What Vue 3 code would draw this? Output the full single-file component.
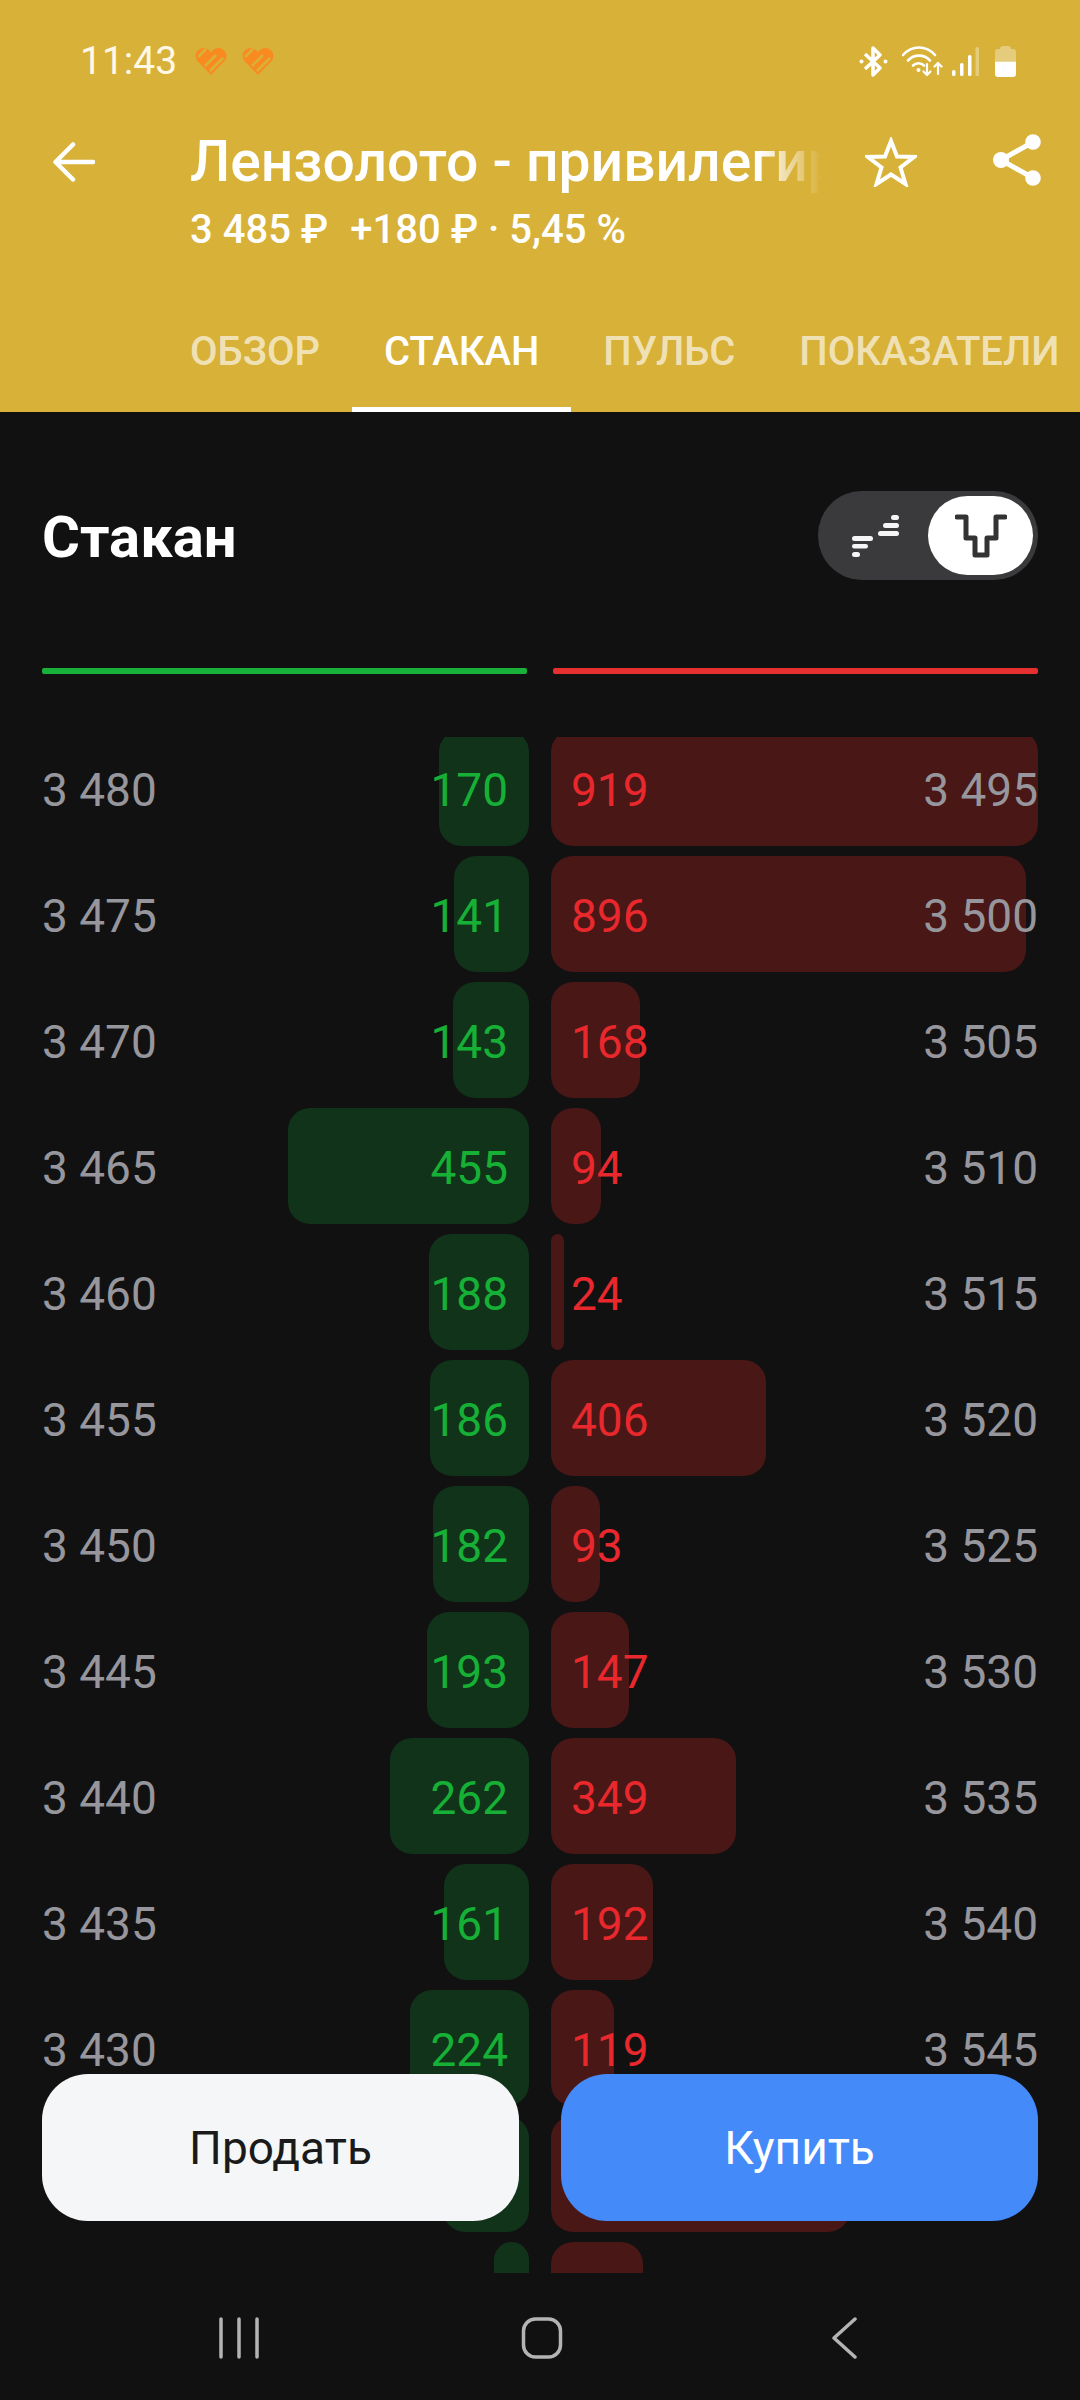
<script setup>
const tabs = ['Обзор', 'Стакан', 'Пульс', 'Показатели'];

const rows = [
  { bid: '3 480', bidQty: 170, ask: '3 495', askQty: 919 },
  { bid: '3 475', bidQty: 141, ask: '3 500', askQty: 896 },
  { bid: '3 470', bidQty: 143, ask: '3 505', askQty: 168 },
  { bid: '3 465', bidQty: 455, ask: '3 510', askQty: 94 },
  { bid: '3 460', bidQty: 188, ask: '3 515', askQty: 24 },
  { bid: '3 455', bidQty: 186, ask: '3 520', askQty: 406 },
  { bid: '3 450', bidQty: 182, ask: '3 525', askQty: 93 },
  { bid: '3 445', bidQty: 193, ask: '3 530', askQty: 147 },
  { bid: '3 440', bidQty: 262, ask: '3 535', askQty: 349 },
  { bid: '3 435', bidQty: 161, ask: '3 540', askQty: 192 },
  { bid: '3 430', bidQty: 224, ask: '3 545', askQty: 119 },
  { bid: '3 425', bidQty: 162, ask: '3 550', askQty: 564 },
  // only the top of this row shows above the nav bar, so no labels
  { bid: '', bidQty: 66, ask: '', askQty: 174 },
];

// bar length follows the quantity, 919 fills the whole column
const barWidth = (qty) => `${Math.round(qty * 0.53)}px`;
</script>

<template>
  <div class="screen">
    <header class="top">
      <div class="status">
        <span class="time">11:43</span>
        <svg v-for="n in 2" :key="n" class="heart" viewBox="0 0 32 28">
          <path d="M16 28 L2.500 14 C-2 8.500 2 1 8.500 1 C11.500 1 14.500 3 16 5.500 C17.500 3 20.500 1 23.500 1 C30 1 34 8.500 29.500 14 Z" fill="#f98a20" />
          <path d="M3 10 L11 2 M10 19 L21 8 M15 24 L28 11" stroke="#d8b138" stroke-width="2.500" fill="none" />
        </svg>
        <div class="status-icons">
          <svg width="29" height="31" viewBox="0 0 29 31" fill="none" stroke="#fff" stroke-width="3.500">
            <path d="M6 8 L21 22 L14 29 V2 L21 9 L6 23" stroke-linejoin="round" />
            <circle cx="2.500" cy="15.500" r="2" fill="#fff" stroke="none" />
            <circle cx="26.500" cy="15.500" r="2" fill="#fff" stroke="none" />
          </svg>
          <svg class="wifi" width="41" height="31" viewBox="0 0 41 31" fill="none" stroke="#fff" stroke-width="2.600" stroke-linecap="round">
            <path d="M1 9 C10 -1 24 -1 33 9" />
            <path d="M6 14.500 C12 8 22 8 28 14.500" />
            <path d="M11 19.500 C14 16.500 19 16.500 22 19.500" />
            <circle cx="16.500" cy="24" r="2" fill="#fff" stroke="none" />
            <path d="M25 18 V29 M21.500 25.500 L25 29 L28.500 25.500" stroke-width="2.200" />
            <path d="M36 28 V17 M32.500 20.500 L36 17 L39.500 20.500" stroke-width="2.200" />
          </svg>
          <svg class="signal" width="28" height="31" viewBox="0 0 28 31" fill="#fff">
            <rect x="0" y="24" width="3.500" height="6" rx="1.500" />
            <rect x="8" y="17" width="3.500" height="13" rx="1.500" />
            <rect x="16" y="9" width="3.500" height="21" rx="1.500" />
            <rect x="23.500" y="1" width="3.500" height="29" rx="1.500" opacity="0.350" />
          </svg>
          <svg class="battery" width="21" height="31" viewBox="0 0 21 31" fill="#fff">
            <path d="M5 3 Q5 0 8 0 H13 Q16 0 16 3 H18 Q21 3 21 6 V15 H0 V6 Q0 3 3 3 Z" opacity="0.350" />
            <path d="M0 15.500 H21 V28 Q21 31 18 31 H3 Q0 31 0 28 Z" />
          </svg>
        </div>
      </div>

      <div class="bar">
        <svg class="back" width="42" height="40" viewBox="0 0 42 40" fill="none" stroke="#fff" stroke-width="4.500" stroke-linecap="round" stroke-linejoin="round">
          <path d="M40 20 H3 M20 2.500 L2.500 20 L20 37.500" />
        </svg>
        <div class="titles">
          <div class="title">Лензолото - привилегированные</div>
          <div class="price">
            <span>3 485 ₽</span>
            <span>+180 ₽ · 5,45 %</span>
          </div>
        </div>
        <svg class="star" width="52" height="50" viewBox="0 0 52 50" fill="none" stroke="#fff" stroke-width="4" stroke-linejoin="miter">
          <path d="M26 4 L32 19.500 L49 20 L35.500 30.500 L40.500 47 L26 37.500 L11.500 47 L16.500 30.500 L3 20 L20 19.500 Z" />
        </svg>
        <svg class="share" width="48" height="52" viewBox="0 0 48 52" fill="#fff" stroke="#fff" stroke-width="5">
          <path d="M40 8 L8 26 L40 44" fill="none" />
          <circle cx="40" cy="8" r="7.800" stroke="none" />
          <circle cx="8" cy="26" r="8" stroke="none" />
          <circle cx="40" cy="44" r="7.800" stroke="none" />
        </svg>
      </div>

      <nav class="tabs">
        <div v-for="(tab, i) in tabs" :key="tab" class="tab" :class="{ active: i === 1 }">{{ tab }}</div>
      </nav>
    </header>

    <section class="heading">
      <h1>Стакан</h1>
      <div class="toggle">
        <div class="toggle-item">
          <svg width="47" height="42" viewBox="0 0 47 42" fill="#f5f5f5">
            <rect x="0" y="21" width="21" height="5" rx="2.500" />
            <rect x="0" y="29" width="16" height="4.500" rx="2.200" />
            <rect x="0" y="37" width="8" height="5" rx="2.500" />
            <rect x="26" y="16" width="21" height="5" rx="2.500" />
            <rect x="31" y="8" width="16" height="5" rx="2.500" />
            <rect x="39" y="0" width="8" height="5" rx="2.500" />
          </svg>
        </div>
        <div class="toggle-item on">
          <svg width="52" height="44" viewBox="0 0 52 44" fill="none" stroke="#333" stroke-width="5" stroke-linecap="round" stroke-linejoin="round">
            <path d="M2 3 H11 V24 H20 V41 H32 V24 H41 V3 H50" />
          </svg>
        </div>
      </div>
    </section>

    <div class="lines">
      <div class="line green"></div>
      <div class="line red"></div>
    </div>

    <div class="book">
      <div class="rows">
        <div v-for="(row, i) in rows" :key="i" class="row">
          <div class="cell bid">
            <div class="fill" :style="{ width: barWidth(row.bidQty) }"></div>
            <template v-if="row.bid">
              <span class="lvl">{{ row.bid }}</span>
              <span class="qty">{{ row.bidQty }}</span>
            </template>
          </div>
          <div class="cell ask">
            <div class="fill" :style="{ width: barWidth(row.askQty) }"></div>
            <template v-if="row.ask">
              <span class="qty">{{ row.askQty }}</span>
              <span class="lvl">{{ row.ask }}</span>
            </template>
          </div>
        </div>
      </div>
    </div>

    <div class="actions">
      <button class="btn sell">Продать</button>
      <button class="btn buy">Купить</button>
    </div>

    <div class="navbar">
      <svg width="60" height="42" viewBox="0 0 60 42" fill="none" stroke="#b4b4b4" stroke-width="3.500" stroke-linecap="round">
        <path d="M12 2 V40 M30 2 V40 M48 2 V40" />
      </svg>
      <svg width="60" height="42" viewBox="0 0 60 42" fill="none" stroke="#b4b4b4" stroke-width="3.500">
        <rect x="11.500" y="2" width="37" height="38" rx="12" />
      </svg>
      <svg width="60" height="42" viewBox="0 0 60 42" fill="none" stroke="#b4b4b4" stroke-width="3.500" stroke-linecap="round" stroke-linejoin="round">
        <path d="M41 2 L20 21 L41 40" />
      </svg>
    </div>
  </div>
</template>

<style>
body {
  background: #111112;
}
</style>

<style scoped>
.screen {
  position: relative;
  width: 1080px;
  height: 2400px;
  overflow: hidden;
  background: #111112;
  color: #fff;
  font-family: Roboto, "Noto Sans", sans-serif;
}

.top {
  display: flex;
  flex-direction: column;
  height: 412px;
  background: #d8b138;
}

.status {
  display: flex;
  align-items: center;
  height: 122px;
  padding: 0 64px 0 80px;
}

.time {
  margin-right: 18px;
  font-size: 39px;
  color: #fff8e6;
}

.heart {
  width: 32px;
  height: 28px;
  margin-right: 15px;
}

.status-icons {
  display: flex;
  align-items: center;
  margin-left: auto;
}

.wifi {
  margin-left: 14px;
}

.signal {
  margin-left: 9px;
}

.battery {
  margin-left: 15px;
}

.bar {
  display: flex;
  align-items: flex-start;
  padding: 0 39px 0 53px;
}

.back {
  flex: none;
  margin-top: 20px;
}

.titles {
  flex: none;
  width: 640px;
  margin-left: 95px;
}

.title {
  height: 74px;
  overflow: hidden;
  font-size: 57px;
  font-weight: 500;
  line-height: 80px;
  white-space: nowrap;
  -webkit-mask-image: linear-gradient(to right, #000 570px, transparent 632px);
  mask-image: linear-gradient(to right, #000 570px, transparent 632px);
}

.price {
  display: flex;
  gap: 22px;
  margin-top: 11px;
  font-size: 40px;
  font-weight: 500;
  line-height: 46px;
}

.star {
  flex: none;
  margin: 15px 0 0 35px;
}

.share {
  flex: none;
  margin: 12px 0 0 76px;
}

.tabs {
  display: flex;
  height: 124px;
  margin-top: auto;
  padding-left: 158px;
}

.tab {
  position: relative;
  display: flex;
  align-items: center;
  padding: 3px 32px 0;
  font-size: 40px;
  font-weight: 500;
  text-transform: uppercase;
  white-space: nowrap;
  color: rgba(255, 255, 255, 0.65);
}

.tab.active {
  color: #fff;
}

.tab.active::after {
  content: "";
  position: absolute;
  left: 0;
  right: 0;
  bottom: 0;
  height: 5px;
  background: #fff;
}

.heading {
  display: flex;
  align-items: center;
  justify-content: space-between;
  margin-top: 79px;
  padding: 0 42px;
}

h1 {
  margin: 2px 0 0;
  font-size: 58px;
  font-weight: 700;
  line-height: 66px;
}

.toggle {
  display: flex;
  width: 220px;
  height: 89px;
  padding: 5px;
  box-sizing: border-box;
  border-radius: 44px;
  background: #3a3a3c;
}

.toggle-item {
  display: flex;
  flex: 1;
  align-items: center;
  justify-content: center;
  border-radius: 40px;
}

.toggle-item.on {
  background: #fff;
}

.lines {
  display: grid;
  grid-template-columns: 485px 485px;
  gap: 26px;
  margin-top: 88px;
  padding: 0 42px;
}

.line {
  height: 6px;
  border-radius: 2px;
}

.line.green {
  background: #18b13a;
}

.line.red {
  background: #e5302f;
}

.book {
  height: 1536px;
  margin-top: 63px;
  overflow: hidden;
}

.rows {
  display: flex;
  flex-direction: column;
  gap: 10px;
  margin-top: -7px;
  padding: 0 42px;
}

.row {
  display: grid;
  grid-template-columns: 487px 487px;
  gap: 22px;
  height: 116px;
}

.cell {
  position: relative;
  display: flex;
  align-items: center;
  justify-content: space-between;
  padding-top: 3px;
  font-size: 46px;
}

.cell span {
  position: relative;
}

.fill {
  position: absolute;
  top: 0;
  bottom: 0;
  border-radius: 22px;
}

.bid {
  padding-right: 21px;
}

.bid .fill {
  right: 0;
  background: #11331a;
}

.ask {
  padding-left: 20px;
}

.ask .fill {
  left: 0;
  background: #481716;
}

.lvl {
  color: #96969c;
}

.bid .qty {
  color: #16b036;
}

.ask .qty {
  color: #e8282c;
}

.actions {
  position: absolute;
  left: 42px;
  right: 42px;
  bottom: 179px;
  display: flex;
  gap: 42px;
}

.btn {
  flex: 1;
  height: 147px;
  border: none;
  border-radius: 46px;
  font-family: inherit;
  font-size: 46px;
}

.sell {
  background: #f5f6f8;
  color: #1a1a1a;
}

.buy {
  background: #448af9;
  color: #fff;
}

.navbar {
  display: flex;
  justify-content: space-between;
  padding: 44px 206px 0 209px;
}
</style>
